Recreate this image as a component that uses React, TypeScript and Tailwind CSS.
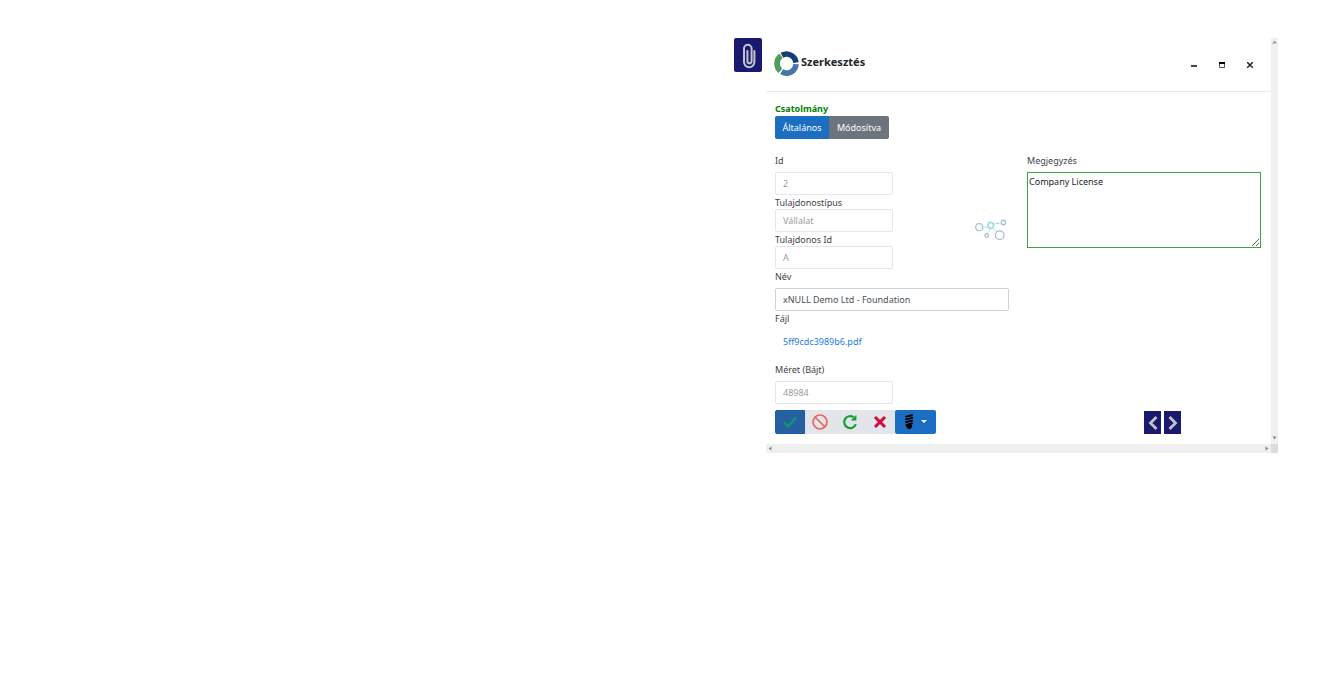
import React, { useState } from 'react';
import clsx from 'clsx';

interface FieldProps {
  id: string;
  label: string;
  value: string;
  disabled?: boolean;
  wide?: boolean;
  spaced?: boolean;
}

const Field: React.FC<FieldProps> = ({ id, label, value, disabled, wide, spaced }) => (
  <div className={clsx('flex flex-col', spaced && 'gap-[5px]')}>
    <label htmlFor={id} className="h-[14px] leading-[16px]">{label}</label>
    <input
      id={id}
      type="text"
      defaultValue={value}
      disabled={disabled}
      className={clsx(
        'h-[23px] rounded-[2px] border bg-white px-[7px]',
        wide ? 'w-full border-[#ced4da] text-[#495057]' : 'w-1/2 min-w-[118px] border-[#e3e6ea] text-[#999da1]'
      )}
    />
  </div>
);

const PaperclipIcon = () => (
  <svg viewBox="0 0 14 26" className="h-[26px] w-[14px]" fill="none" stroke="#c3c3cf" strokeWidth="2" strokeLinecap="round">
    <path d="M12.4 8v11a5.2 5.2 0 0 1-10.4 0V5.6a3.8 3.8 0 0 1 7.6 0v12.6a2.1 2.1 0 0 1-4.2 0V8" />
  </svg>
);

const RingLogo = () => (
  <svg viewBox="0 0 25 25" className="h-[25px] w-[25px]" fill="none" strokeWidth="5.6">
    <path d="M7.9 4.2A9.5 9.5 0 0 1 21.9 11.6" stroke="#153f77" />
    <path d="M22 13.1A9.5 9.5 0 0 1 7.6 20.7" stroke="#4676aa" />
    <path d="M6.4 19.8A9.5 9.5 0 0 1 7 4.8" stroke="#529b5b" />
  </svg>
);

const NetworkIcon = () => (
  <svg viewBox="0 0 32 22" className="h-[22px] w-[32px]" fill="none">
    <g stroke="#a6e3e8" strokeWidth="1">
      <path d="M8 8h4M18 9l4 4M15 10l-2 4M19 5l3-.5" />
      <circle cx="15.7" cy="6.4" r="2.8" strokeWidth="2" />
    </g>
    <g stroke="#a9b9cc" strokeWidth="1.2">
      <circle cx="4.2" cy="8.2" r="3.5" stroke="#a5c9d8" />
      <circle cx="24.7" cy="16.2" r="4.3" />
      <circle cx="11.7" cy="16.5" r="1.8" />
      <circle cx="28.3" cy="3.4" r="2.2" />
    </g>
    <circle cx="23.3" cy="4.3" r="0.9" fill="#a9b9cc" />
  </svg>
);

const CheckIcon = () => (
  <svg viewBox="0 0 14 12" className="h-[12px] w-[14px]" fill="none" stroke="#109b62" strokeWidth="2.2">
    <path d="M1 6.3l4 4 8-8.8" />
  </svg>
);

const BanIcon = () => (
  <svg viewBox="0 0 16 16" className="h-[16px] w-[16px]" fill="none" stroke="#e8685c" strokeWidth="1.7">
    <circle cx="8" cy="8" r="7" />
    <path d="M3 3l10 10" />
  </svg>
);

const ReloadIcon = () => (
  <svg viewBox="0 0 16 16" className="h-[16px] w-[16px]">
    <path d="M11.6 3.2A6 6 0 1 0 13.8 10.2" fill="none" stroke="#14a035" strokeWidth="2.2" />
    <path d="M14.4 0.8v5.6H8.8z" fill="#14a035" />
  </svg>
);

const CrossIcon = () => (
  <svg viewBox="0 0 14 14" className="h-[14px] w-[14px]" fill="none" stroke="#d10a38" strokeWidth="3">
    <path d="M2 2l10 10M12 2L2 12" />
  </svg>
);

const BulbIcon = () => (
  <svg viewBox="0 0 10 16" className="h-[16px] w-[10px]" fill="none" stroke="#000" strokeWidth="1.9" strokeLinecap="round">
    <path d="M2 2.6l6-1.4M2 5.4l6.5-1.6M2.2 8.2l6-1.6M2.6 11l5.4-1.6" />
    <path d="M2.4 11h5.2v2L6 14.8H4.4L3 13z" fill="#000" strokeWidth="1" />
  </svg>
);

const Chevron: React.FC<{ d: string }> = ({ d }) => (
  <svg viewBox="0 0 12 16" className="h-[16px] w-[12px]" fill="none" stroke="#c3c3c3" strokeWidth="2.8">
    <path d={d} />
  </svg>
);

const WindowControls = () => (
  <div className="flex gap-[18px]">
    <button type="button" aria-label="Kis méret" className="flex size-[10px] items-center justify-center">
      <svg viewBox="0 0 10 10" className="size-[10px]"><path d="M2 5h6v2H2z" fill="#444" /></svg>
    </button>
    <button type="button" aria-label="Teljes méret" className="flex size-[10px] items-center justify-center">
      <svg viewBox="0 0 10 10" className="size-[10px]" fill="none" stroke="#555">
        <path d="M2.5 3v4.5h5V3" />
        <path d="M2 3h6" stroke="#000" strokeWidth="2" />
      </svg>
    </button>
    <button type="button" aria-label="Bezárás" className="flex size-[10px] items-center justify-center">
      <svg viewBox="0 0 10 10" className="size-[10px]" fill="none" stroke="#222" strokeWidth="1.5"><path d="M2.2 2.2l5.6 5.6M7.8 2.2L2.2 7.8" /></svg>
    </button>
  </div>
);

export default function App() {
  const [tab, setTab] = useState<'general' | 'modified'>('general');
  const [note, setNote] = useState('Company License');

  return (
    <main className="flex min-h-screen items-start justify-end gap-1 bg-white pt-[38px] pr-[63px] font-['Noto_Sans','Open_Sans',sans-serif] text-[9px] text-[#3f4246]">
      <button type="button" aria-label="Csatolmányok" className="flex h-[34px] w-[28px] shrink-0 items-center justify-center rounded-[2px] bg-[#191970] pt-[2px] pl-[2px]">
        <PaperclipIcon />
      </button>

      <section className="grid min-w-0 max-w-[512px] flex-1 grid-cols-[1fr_7px]">
        <div className="relative min-w-0 pb-[10px]">
          <header className="flex h-[54px] items-center justify-between border-b border-[#e9ecef] pr-[16px] pl-[8px]">
            <div className="flex items-center gap-[2px] pb-[2px]">
              <RingLogo />
              <h1 className="pb-[3px] text-[11px] leading-[16px] font-bold text-[#212529]">Szerkesztés</h1>
            </div>
            <WindowControls />
          </header>

          <div className="pt-[10px] pr-[10px] pl-[9px]">
            <h2 className="h-[14px] text-[9px] leading-[14px] font-bold text-[#008000]">Csatolmány</h2>
            <div className="flex h-[23px] text-white">
              <button
                type="button"
                onClick={() => setTab('general')}
                className={clsx('w-[54px] rounded-l-[2px]', tab === 'general' ? 'bg-[#1b6ec2]' : 'bg-[#6c757d]')}
              >
                Általános
              </button>
              <button
                type="button"
                onClick={() => setTab('modified')}
                className={clsx('w-[60px] rounded-r-[2px]', tab === 'modified' ? 'bg-[#1b6ec2]' : 'bg-[#6c757d]')}
              >
                Módosítva
              </button>
            </div>

            <form className="grid grid-cols-2 gap-x-[18px] gap-y-[6px] pt-[14px]">
              <div className="flex flex-col">
                <Field id="id" label="Id" value="2" disabled spaced />
                <Field id="owner-type" label="Tulajdonostípus" value="Vállalat" disabled />
                <Field id="owner-id" label="Tulajdonos Id" value="A" disabled />
                <Field id="name" label="Név" value="xNULL Demo Ltd - Foundation" wide spaced />
                <span className="h-[14px] leading-[16px]">Fájl</span>
                <a href="#file" className="flex h-[37px] items-center px-[8px] pb-[3px] text-[#1c7ce6]">5ff9cdc3989b6.pdf</a>
                <Field id="size" label="Méret (Bájt)" value="48984" disabled spaced />
              </div>
              <div className="flex flex-col gap-[5px]">
                <label htmlFor="note" className="h-[14px] leading-[16px]">Megjegyzés</label>
                <textarea
                  id="note"
                  value={note}
                  onChange={e => setNote(e.target.value)}
                  className="h-[76px] w-full border border-[#3fa343] px-px py-[2px] leading-[14px] text-[#212529]"
                />
              </div>

              <div className="flex h-[24px]">
                <button type="button" aria-label="Mentés" className="flex w-[30px] items-center justify-center rounded-l-[2px] border border-[#1b5fa8] bg-[#2460a2]"><CheckIcon /></button>
                <button type="button" aria-label="Mégse" className="flex w-[30px] items-center justify-center bg-[#e2e6ea]"><BanIcon /></button>
                <button type="button" aria-label="Frissítés" className="flex w-[30px] items-center justify-center bg-[#e2e6ea]"><ReloadIcon /></button>
                <button type="button" aria-label="Törlés" className="flex w-[30px] items-center justify-center bg-[#e2e6ea]"><CrossIcon /></button>
                <button type="button" aria-label="Műveletek" className="flex w-[41px] items-center justify-center gap-[7px] rounded-[2px] bg-[#1b6ec2]">
                  <BulbIcon />
                  <svg viewBox="0 0 6 6" className="size-[6px]"><path d="M0 1h6L3 4z" fill="#fff" /></svg>
                </button>
              </div>
              <div className="flex gap-[3px] pt-px pl-[50%]">
                <button type="button" aria-label="Előző" className="flex h-[23px] w-[17px] items-center justify-center bg-[#191970]"><Chevron d="M9.5 2L3.5 8l6 6" /></button>
                <button type="button" aria-label="Következő" className="flex h-[23px] w-[17px] items-center justify-center bg-[#191970]"><Chevron d="M2.5 2l6 6-6 6" /></button>
              </div>
            </form>
          </div>

          {/* busy indicator floats over the form */}
          <div className="absolute top-[181px] left-[209px]">
            <NetworkIcon />
          </div>
        </div>

        {/* scroll tracks */}
        <div className="flex flex-col items-center justify-between bg-[#f0f0f0] pt-[2px] pb-[4px]">
          <svg viewBox="0 0 5 4" className="h-[4px] w-[5px]"><path d="M0 3.5h5L2.5 0.5z" fill="#999" /></svg>
          <svg viewBox="0 0 5 4" className="h-[4px] w-[5px]"><path d="M0.5 0.5h4L2.5 3.5z" fill="#888" /></svg>
        </div>
        <div className="flex h-[9px] items-center justify-between bg-[#f0f0f0] px-[2px]">
          <svg viewBox="0 0 4 5" className="h-[5px] w-[4px]"><path d="M3.5 0.5v4L0.5 2.5z" fill="#888" /></svg>
          <svg viewBox="0 0 4 5" className="h-[5px] w-[4px]"><path d="M0.5 0.5v4L3.5 2.5z" fill="#888" /></svg>
        </div>
        <div className="bg-[#dcdcdc]" />
      </section>
    </main>
  );
}
